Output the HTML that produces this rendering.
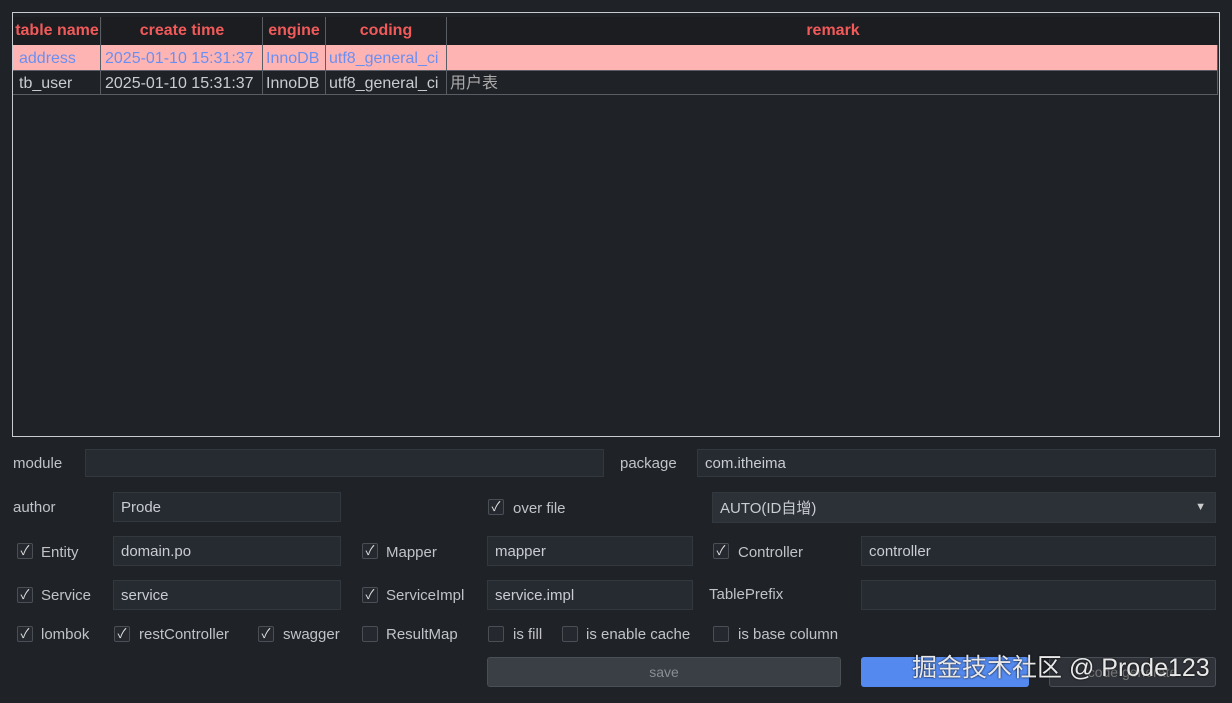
<!DOCTYPE html>
<html><head><meta charset="utf-8"><style>
body{margin:0;width:1232px;height:703px;background:#1f2227;font-family:"Liberation Sans","Noto Sans CJK SC",sans-serif;color:#c9ccd1;position:relative;overflow:hidden}
.a{position:absolute}
.tb{left:12px;top:12px;width:1206px;height:423px;border:1px solid #c8cbd0;background:#1f2227}
.c{position:absolute;font-size:16px;line-height:25px;white-space:nowrap;overflow:hidden}
.h{color:#f25a5a;font-weight:bold;text-align:center;top:4px;height:28px;line-height:28px;background:#1b1d21}
.vl{position:absolute;width:1px;background:#5a5e64}
.inp{position:absolute;background:#262a31;border:1px solid #33373e;height:28px;box-sizing:border-box;font-size:15px;padding-left:7px;color:#c9ccd1;display:flex;align-items:center}
.lb{position:absolute;font-size:15px;line-height:20px;color:#c0c3c8}
.cb{position:absolute;width:16px;height:16px;border:1px solid #4a4e55;border-radius:2px;background:#25282e;box-sizing:border-box;font-size:13px;line-height:14px;text-align:center;color:#e0e0e0}
.btn{position:absolute;height:30px;border-radius:3px;box-sizing:border-box;font-size:14px;text-align:center;line-height:28px}
</style></head><body>
<div class="a tb">
 <div class="c h" style="left:0;width:88px">table name</div>
 <div class="c h" style="left:89px;width:160px">create time</div>
 <div class="c h" style="left:250px;width:62px">engine</div>
 <div class="c h" style="left:313px;width:120px">coding</div>
 <div class="c h" style="left:434px;width:772px">remark</div>
 <div class="a" style="left:0;top:32px;width:1204px;height:25px;background:#ffb4b4"></div>
 <div class="a" style="left:0;top:57px;width:1204px;height:25px;border-bottom:1px solid #5a5e64;border-top:1px solid #5a5e64;box-sizing:border-box"></div>
 <div class="c" style="left:6px;top:33px;color:#6b8ff0">address</div>
 <div class="c" style="left:92px;top:33px;color:#6b8ff0">2025-01-10 15:31:37</div>
 <div class="c" style="left:253px;top:33px;color:#6b8ff0">InnoDB</div>
 <div class="c" style="left:316px;top:33px;color:#6b8ff0">utf8_general_ci</div>
 <div class="c" style="left:6px;top:58px">tb_user</div>
 <div class="c" style="left:92px;top:58px">2025-01-10 15:31:37</div>
 <div class="c" style="left:253px;top:58px">InnoDB</div>
 <div class="c" style="left:316px;top:58px">utf8_general_ci</div>
 <div class="c" style="left:437px;top:58px;color:#aaa">用户表</div>
 <div class="vl" style="left:87px;top:4px;height:78px"></div>
 <div class="vl" style="left:249px;top:4px;height:78px"></div>
 <div class="vl" style="left:312px;top:4px;height:78px"></div>
 <div class="vl" style="left:433px;top:4px;height:78px"></div>
 <div class="vl" style="left:1204px;top:32px;height:50px"></div>
</div>

<div class="lb" style="left:13px;top:454px">module</div>
<div class="inp" style="left:85px;top:449px;width:519px"></div>
<div class="lb" style="left:620px;top:454px">package</div>
<div class="inp" style="left:697px;top:449px;width:519px">com.itheima</div>

<div class="lb" style="left:13px;top:498px">author</div>
<div class="inp" style="left:113px;top:492px;width:228px;height:30px">Prode</div>
<div class="cb" style="left:488px;top:499px">✓</div><div class="lb" style="left:513px;top:499px">over file</div>
<div class="inp" style="left:712px;top:492px;width:504px;height:31px;background:#2c3037">AUTO(ID自增)<span style="position:absolute;right:9px;top:8px;font-size:11px;color:#ccc">▼</span></div>

<div class="cb" style="left:17px;top:543px">✓</div><div class="lb" style="left:41px;top:543px">Entity</div>
<div class="inp" style="left:113px;top:536px;width:228px;height:30px">domain.po</div>
<div class="cb" style="left:362px;top:543px">✓</div><div class="lb" style="left:386px;top:543px">Mapper</div>
<div class="inp" style="left:487px;top:536px;width:206px;height:30px">mapper</div>
<div class="cb" style="left:713px;top:543px">✓</div><div class="lb" style="left:738px;top:543px">Controller</div>
<div class="inp" style="left:861px;top:536px;width:355px;height:30px">controller</div>

<div class="cb" style="left:17px;top:587px">✓</div><div class="lb" style="left:41px;top:586px">Service</div>
<div class="inp" style="left:113px;top:580px;width:228px;height:30px">service</div>
<div class="cb" style="left:362px;top:587px">✓</div><div class="lb" style="left:386px;top:586px">ServiceImpl</div>
<div class="inp" style="left:487px;top:580px;width:206px;height:30px">service.impl</div>
<div class="lb" style="left:709px;top:585px">TablePrefix</div>
<div class="inp" style="left:861px;top:580px;width:355px;height:30px"></div>

<div class="cb" style="left:17px;top:626px">✓</div><div class="lb" style="left:41px;top:625px">lombok</div>
<div class="cb" style="left:114px;top:626px">✓</div><div class="lb" style="left:139px;top:625px">restController</div>
<div class="cb" style="left:258px;top:626px">✓</div><div class="lb" style="left:283px;top:625px">swagger</div>
<div class="cb" style="left:362px;top:626px"></div><div class="lb" style="left:386px;top:625px">ResultMap</div>
<div class="cb" style="left:488px;top:626px"></div><div class="lb" style="left:513px;top:625px">is fill</div>
<div class="cb" style="left:562px;top:626px"></div><div class="lb" style="left:586px;top:625px">is enable cache</div>
<div class="cb" style="left:713px;top:626px"></div><div class="lb" style="left:738px;top:625px">is base column</div>

<div class="btn" style="left:487px;top:657px;width:354px;background:#3a3e45;border:1px solid #4a4e55;color:#8a8e94">save</div>
<div class="btn" style="left:861px;top:657px;width:168px;background:#548af0;color:#fff"></div>
<div class="btn" style="left:1049px;top:657px;width:167px;background:#2f3339;border:1px solid #4a4e55;color:#777">code generate</div>
<div class="a" style="left:912px;top:652px;font-size:25px;line-height:32px;color:#e8e8e8;text-shadow:0 0 2px #000;white-space:nowrap">掘金技术社区 @ Prode123</div>
</body></html>
